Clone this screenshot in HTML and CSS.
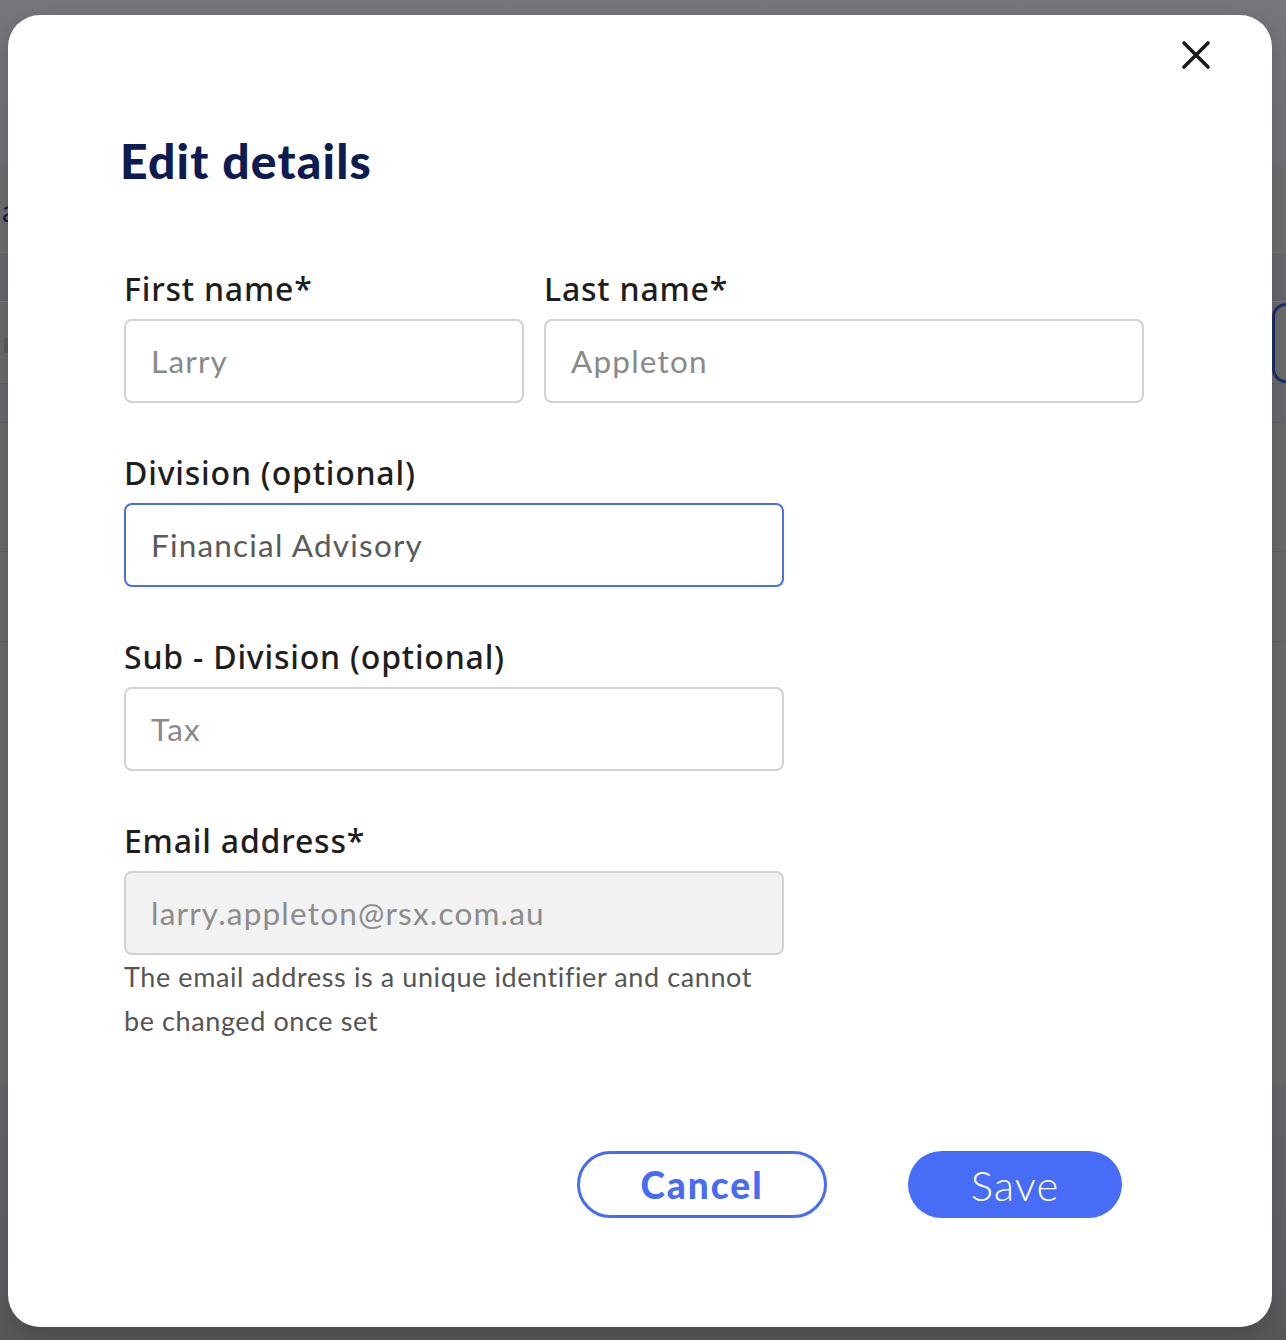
FILE: index.html
```html
<!DOCTYPE html>
<html lang="en">
<head>
<meta charset="utf-8">
<title>Edit details</title>
<link rel="stylesheet" href="styles.css">
</head>
<body>
<div class="backdrop">
  <div class="band b-top"></div>
  <div class="band b-grey1"><span class="peek">a</span></div>
  <div class="band b-blue1"></div>
  <div class="band b-grey2"><span class="peek-box"></span></div>
  <div class="band b-blue2"></div>
  <div class="band b-grey3"></div>
  <div class="band b-grey4"></div>
  <div class="band b-grey5"></div>
  <div class="band b-blue3"></div>
  <span class="peek-btn"></span>
</div>

<div class="modal" role="dialog" aria-labelledby="title">
  <button class="close" aria-label="Close">
    <svg viewBox="0 0 32 32" width="32" height="32"><path d="M4 4 L28 28 M28 4 L4 28" stroke="#1c1c1c" stroke-width="3.6" stroke-linecap="round"/></svg>
  </button>
  <h1 id="title" class="title">Edit details</h1>

  <form class="form">
    <div class="row">
      <div class="field w-first">
        <label class="label">First name*</label>
        <div class="input">Larry</div>
      </div>
      <div class="field w-last">
        <label class="label">Last name*</label>
        <div class="input">Appleton</div>
      </div>
    </div>
    <div class="field w-wide">
      <label class="label">Division (optional)</label>
      <div class="input focused">Financial Advisory</div>
    </div>
    <div class="field w-wide">
      <label class="label">Sub - Division (optional)</label>
      <div class="input">Tax</div>
    </div>
    <div class="field w-wide">
      <label class="label">Email address*</label>
      <div class="input disabled">larry.appleton@rsx.com.au</div>
      <p class="help">The email address is a unique identifier and cannot be changed once set</p>
    </div>
  </form>

  <div class="actions">
    <button class="btn btn-outline" type="button">Cancel</button>
    <button class="btn btn-primary" type="button">Save</button>
  </div>
</div>
</body>
</html>
```

FILE: styles.css
```css
* { box-sizing: border-box; }
html, body { margin: 0; padding: 0; }
body {
  width: 1286px;
  height: 1340px;
  overflow: hidden;
  position: relative;
  background: #5a5a5a;
  font-family: "Lato", "Noto Sans", sans-serif;
}

.backdrop { display: flex; flex-direction: column; height: 1340px; position: relative; }
.band { width: 100%; flex: none; border-bottom: 1px solid rgba(255,255,255,0.06); position: relative; overflow: hidden; }
.b-top { height: 167px; background: linear-gradient(#76777c, #707177); border: 0; }
.b-grey1 { height: 86px; background: #6d6d6d; }
.b-blue1 { height: 49px; background: #67686e; border-bottom: 1px solid #7a7a7a; }
.b-grey2 { height: 82px; background: #6c6c6c; border-bottom: 1px solid #5f6066; }
.b-blue2 { height: 39px; background: #67686e; border-bottom: 1px solid #616161; }
.b-grey3 { height: 129px; background: #6b6b6b; border-bottom: 1px solid #626262; }
.b-grey4 { height: 90px; background: #6b6b6b; border-bottom: 1px solid #626262; }
.b-grey5 { height: 443px; background: #6b6b6b; border: 0; }
.b-blue3 { flex: 1; background: linear-gradient(#65666c, #606166 70%, #575757); border: 0; }
.peek { position: absolute; left: 2px; top: 28px; font-size: 30px; line-height: 30px; color: #15224f; font-family: "Lato", sans-serif; }
.peek-box { position: absolute; left: 4px; top: 36px; width: 8px; height: 15px; background: #5d5d5d; }
.peek-btn { position: absolute; left: 1272px; top: 303px; width: 60px; height: 80px; border: 3px solid #1f2c6e; border-radius: 14px; }

.modal {
  position: absolute;
  left: 8px;
  top: 15px;
  width: 1264px;
  height: 1312px;
  background: #fff;
  border-radius: 32px;
  box-shadow: 0 8px 24px rgba(0,0,0,0.18);
  padding: 126px 0 0 116px;
}
.close {
  position: absolute;
  right: 60px;
  top: 24px;
  width: 32px;
  height: 32px;
  padding: 0;
  border: 0;
  background: none;
}
.close svg { display: block; }

.title {
  margin: 0 0 0 -4px;
  font-family: "Lato", sans-serif;
  font-weight: 900;
  font-size: 48px;
  line-height: 40px;
  color: #0e1a52;
  letter-spacing: 1.2px;
}

.form { display: flex; flex-direction: column; gap: 50px; margin-top: 88px; }
.row { display: flex; gap: 20px; }
.field { display: flex; flex-direction: column; }
.w-first { width: 400px; }
.w-last { width: 600px; }
.w-wide { width: 660px; }
.label {
  font-family: "Noto Sans", "Lato", sans-serif;
  font-weight: 500;
  font-size: 32px;
  line-height: 40px;
  color: #1e1e1e;
  margin-bottom: 10px;
  letter-spacing: 0.8px;
}
.input {
  height: 84px;
  border: 2px solid #d2d2d2;
  border-radius: 8px;
  padding: 0 25px;
  display: flex;
  align-items: center;
  font-size: 31.5px;
  color: #8a8a8a;
  letter-spacing: 1.2px;
}
.input.focused { border-color: #4b6ef0; color: #5a5a5a; }
.input.disabled { background: #f2f2f2; color: #8c8c8c; }
.help {
  margin: 0;
  font-size: 27px;
  line-height: 44px;
  color: #555;
  letter-spacing: 0.6px;
}

.actions {
  position: absolute;
  left: 569px;
  top: 1136px;
  display: flex;
  gap: 81px;
}
.btn {
  height: 67px;
  border-radius: 34px;
  font-family: "Lato", sans-serif;
  cursor: pointer;
}
.btn-outline {
  width: 250px;
  background: #fff;
  border: 3px solid #476cf5;
  color: #476cf5;
  font-weight: 900;
  font-size: 37px;
  letter-spacing: 2px;
}
.btn-primary {
  width: 214px;
  background: #476cf5;
  border: 0;
  color: #fff;
  font-weight: 300;
  font-size: 42px;
  letter-spacing: 1px;
}
```
